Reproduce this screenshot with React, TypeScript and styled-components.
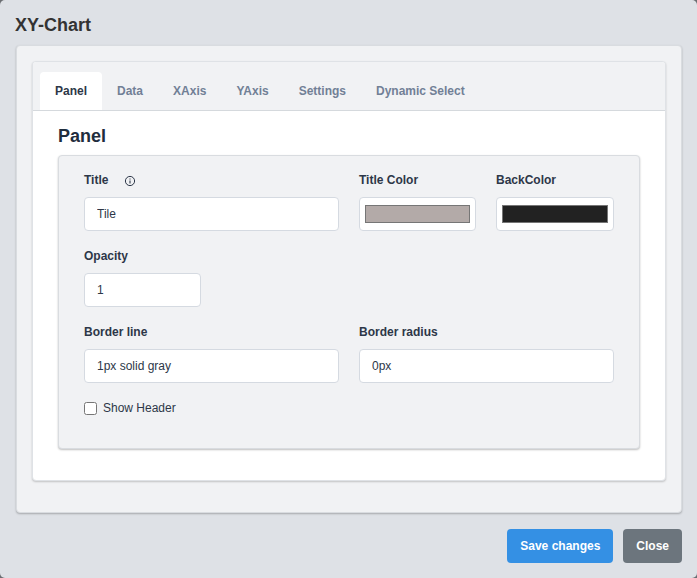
import { createGlobalStyle, styled } from "styled-components";
import { useState } from "react";

const GlobalStyle = createGlobalStyle`
  html, body {
    margin: 0;
    padding: 0;
    background: #6b6e72;
  }
  * {
    box-sizing: border-box;
  }
`;

const Modal = styled.div`
  width: 697px;
  height: 578px;
  background: #dee1e6;
  border-radius: 5px;
  font-family: "Liberation Sans", Arial, sans-serif;
  color: #2d3748;
  display: flex;
  flex-direction: column;
  padding: 15px 15px 15px 16px;
`;

const ModalTitle = styled.h1`
  margin: 0 0 0 -1px;
  height: 30px;
  font-size: 18px;
  line-height: 20px;
  font-weight: 700;
  color: #333;
`;

const OuterCard = styled.div`
  height: 468px;
  background: #f1f2f4;
  border: 1px solid #d9dce0;
  border-radius: 4px;
  box-shadow: 0 1px 2px rgba(0, 0, 0, 0.25);
  padding: 15px;
`;

const InnerCard = styled.div`
  height: 420px;
  background: #fff;
  border: 1px solid #dfe2e6;
  border-radius: 4px;
  box-shadow: 0 1px 2px rgba(0, 0, 0, 0.2);
  overflow: hidden;
`;

const TabBar = styled.div`
  height: 49px;
  background: #f1f2f4;
  border-bottom: 1px solid #d5d9dd;
  padding: 10px 7px 0;
  display: flex;
  align-items: stretch;
`;

const Tab = styled.div<{ $active?: boolean }>`
  height: 38px;
  padding: 0 15px;
  display: flex;
  align-items: center;
  font-size: 12px;
  font-weight: 700;
  border-radius: 4px 4px 0 0;
  background: ${(p) => (p.$active ? "#fff" : "transparent")};
  color: ${(p) => (p.$active ? "#2d3748" : "#718096")};
`;

const TabBody = styled.div`
  padding: 15px 25px 0;
`;

const PanelHeading = styled.h2`
  margin: 0 0 9px;
  font-size: 18px;
  line-height: 20px;
  font-weight: 700;
  color: #1f2d3d;
`;

const Section = styled.div`
  height: 294px;
  background: #f1f2f4;
  border: 1px solid #d9dce0;
  border-radius: 4px;
  box-shadow: 0 1px 2px rgba(0, 0, 0, 0.25);
  padding: 16px 25px 0;
  display: grid;
  grid-template-columns: 255px 117px 118px;
  column-gap: 20px;
  grid-auto-rows: 76px;
  align-content: start;
`;

const Field = styled.div<{ $span?: number }>`
  grid-column: span ${(p) => p.$span ?? 1};
  display: flex;
  flex-direction: column;
`;

const LabelRow = styled.div`
  height: 17px;
  margin-bottom: 8px;
  display: flex;
  align-items: center;
  gap: 16px;
`;

const Label = styled.label`
  font-size: 12px;
  line-height: 17px;
  font-weight: 700;
  color: #2d3748;
`;

const InfoIcon = styled.svg`
  width: 12px;
  height: 12px;
  color: #2d3748;
`;

const TextInput = styled.input<{ $width?: number }>`
  width: ${(p) => (p.$width ? `${p.$width}px` : "100%")};
  height: 34px;
  padding: 0 12px;
  background: #fff;
  border: 1px solid #d5dae1;
  border-radius: 4px;
  font-family: inherit;
  font-size: 12px;
  color: #2d3748;
  outline: none;
`;

const ColorBox = styled.div`
  height: 34px;
  padding: 7px 5px;
  background: #fff;
  border: 1px solid #d5dae1;
  border-radius: 4px;
`;

const ColorFill = styled.div<{ $color: string }>`
  height: 100%;
  background: ${(p) => p.$color};
  border: 1px solid #767676;
`;

const CheckRow = styled.label`
  grid-column: span 3;
  display: flex;
  align-items: flex-start;
  gap: 6px;
  font-size: 12px;
  line-height: 17px;
  color: #2d3748;
`;

const Check = styled.input`
  width: 13px;
  height: 13px;
  margin: 2px 0 0;
`;

const Footer = styled.div`
  margin-top: 16px;
  display: flex;
  justify-content: flex-end;
  gap: 10px;
`;

const Button = styled.button<{ $variant: "primary" | "secondary" }>`
  height: 34px;
  padding: 0 13px;
  border: none;
  border-radius: 4px;
  font-family: inherit;
  font-size: 12px;
  font-weight: 700;
  color: #fff;
  background: ${(p) => (p.$variant === "primary" ? "#3490e4" : "#6c757d")};
`;

const tabs = ["Panel", "Data", "XAxis", "YAxis", "Settings", "Dynamic Select"];

export default function App() {
  const [active] = useState("Panel");

  return (
    <>
      <GlobalStyle />
      <Modal>
        <ModalTitle>XY-Chart</ModalTitle>
        <OuterCard>
          <InnerCard>
            <TabBar>
              {tabs.map((t) => (
                <Tab key={t} $active={t === active}>
                  {t}
                </Tab>
              ))}
            </TabBar>
            <TabBody>
              <PanelHeading>Panel</PanelHeading>
              <Section>
                <Field>
                  <LabelRow>
                    <Label>Title</Label>
                    <InfoIcon viewBox="0 0 12 12" fill="none" stroke="currentColor">
                      <circle cx="6" cy="6" r="4.6" strokeWidth="1" />
                      <path d="M6 5.4v3" strokeWidth="1.1" />
                      <path d="M6 3.4v1" strokeWidth="1.1" />
                    </InfoIcon>
                  </LabelRow>
                  <TextInput defaultValue="Tile" />
                </Field>
                <Field>
                  <LabelRow>
                    <Label>Title Color</Label>
                  </LabelRow>
                  <ColorBox>
                    <ColorFill $color="#b3aaa8" />
                  </ColorBox>
                </Field>
                <Field>
                  <LabelRow>
                    <Label>BackColor</Label>
                  </LabelRow>
                  <ColorBox>
                    <ColorFill $color="#222222" />
                  </ColorBox>
                </Field>
                <Field $span={3}>
                  <LabelRow>
                    <Label>Opacity</Label>
                  </LabelRow>
                  <TextInput $width={117} defaultValue="1" />
                </Field>
                <Field>
                  <LabelRow>
                    <Label>Border line</Label>
                  </LabelRow>
                  <TextInput defaultValue="1px solid gray" />
                </Field>
                <Field $span={2}>
                  <LabelRow>
                    <Label>Border radius</Label>
                  </LabelRow>
                  <TextInput defaultValue="0px" />
                </Field>
                <CheckRow>
                  <Check type="checkbox" />
                  Show Header
                </CheckRow>
              </Section>
            </TabBody>
          </InnerCard>
        </OuterCard>
        <Footer>
          <Button $variant="primary">Save changes</Button>
          <Button $variant="secondary">Close</Button>
        </Footer>
      </Modal>
    </>
  );
}
